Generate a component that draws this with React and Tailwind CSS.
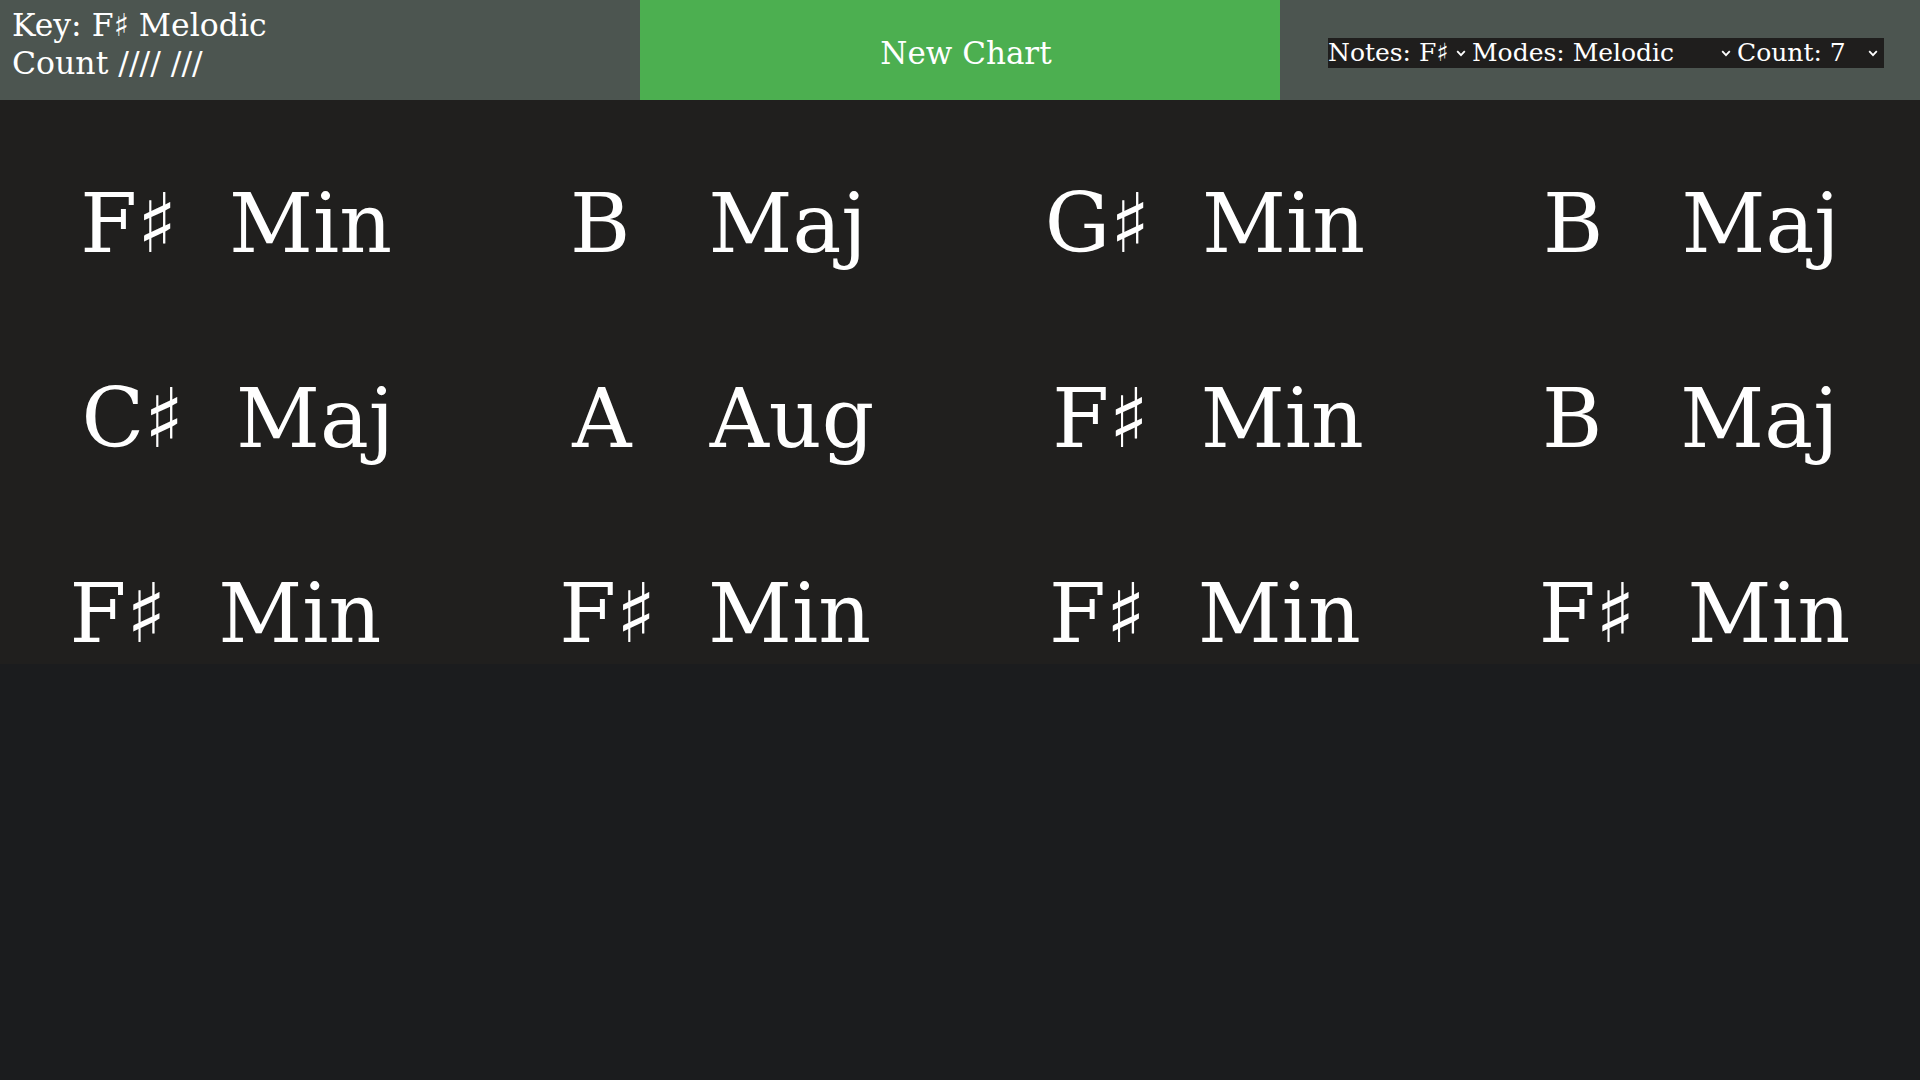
import React from "react";

const rows = [
  [
    ["F♯", "Min"],
    ["B", "Maj"],
    ["G♯", "Min"],
    ["B", "Maj"],
  ],
  [
    ["C♯", "Maj"],
    ["A", "Aug"],
    ["F♯", "Min"],
    ["B", "Maj"],
  ],
  [
    ["F♯", "Min"],
    ["F♯", "Min"],
    ["F♯", "Min"],
    ["F♯", "Min"],
  ],
];

const Chevron = () => (
  <svg width="10" height="7" viewBox="0 0 10 7" className="shrink-0">
    <path d="M1.2 1.2 L5 5.2 L8.8 1.2" fill="none" stroke="#ffffff" strokeWidth="1.8" />
  </svg>
);

const Picker = ({ label, width }) => (
  <div className={`flex items-center justify-between h-[30px] pr-[6px] ${width}`}>
    <span>{label}</span>
    <Chevron />
  </div>
);

// root is padded to two characters, then two spaces before the quality
const Chord = ({ root, quality }) => (
  <div className="whitespace-pre">{`${root.padEnd(2, " ")}  ${quality}`}</div>
);

export default function App() {
  return (
    <div
      className="min-h-screen bg-[#1b1c1e] text-white"
      style={{ fontFamily: '"DejaVu Serif", serif' }}
    >
      <header className="grid grid-cols-3 h-[100px] bg-[#4c5550]">
        <div className="pl-3 pt-[6px] text-[31.5px] leading-[38px]">
          <div>Key: F♯ Melodic</div>
          <div>Count //// ///</div>
        </div>
        <button className="bg-[#4caf50] text-[31px] pt-[6px] pl-[12px] text-white">New Chart</button>
        <div className="flex items-center justify-center pt-[6px] pl-[12px]">
          <div className="flex bg-[#1f1e1d] text-[25px] leading-[30px]">
            <Picker label="Notes: F♯" width="w-[144px]" />
            <Picker label="Modes: Melodic" width="w-[265px]" />
            <Picker label="Count: 7" width="w-[147px]" />
          </div>
        </div>
      </header>

      <main className="flex flex-col h-[564px] bg-[#201f1e] pt-[77px] gap-[102px] text-[82px] leading-[93px]">
        {rows.map((row, i) => (
          <div key={i} className="flex justify-center gap-[178px]">
            {row.map(([root, quality], j) => (
              <Chord key={j} root={root} quality={quality} />
            ))}
          </div>
        ))}
      </main>
    </div>
  );
}
